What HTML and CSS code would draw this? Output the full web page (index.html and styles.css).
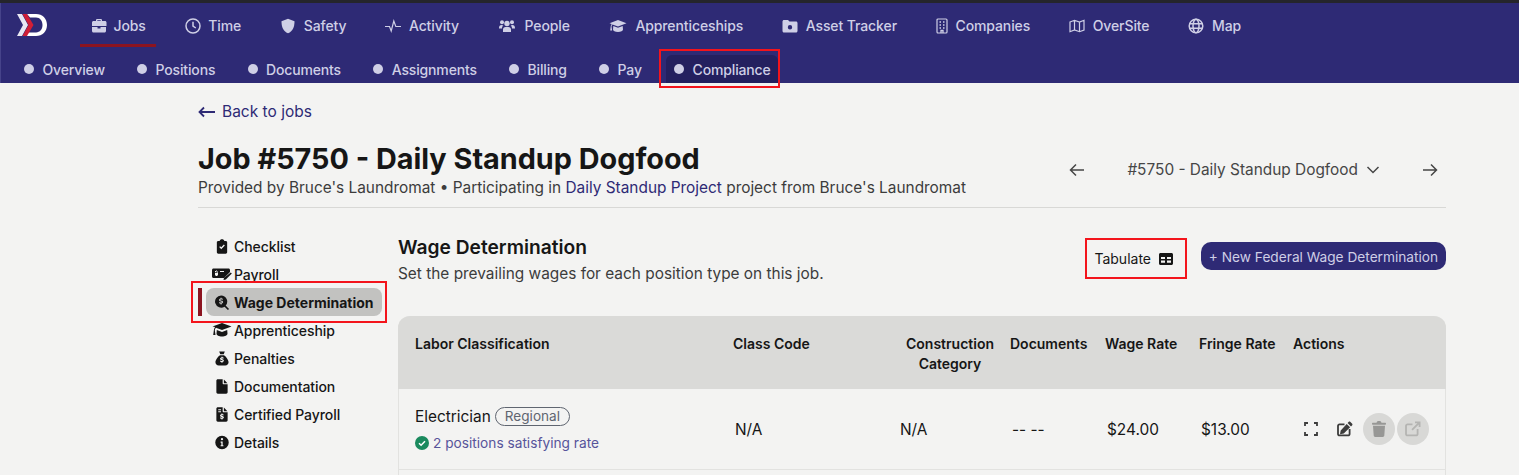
FILE: index.html
```html
<!DOCTYPE html>
<html lang="en">
<head>
    <meta charset="UTF-8">
    <meta name="viewport" content="width=device-width, initial-scale=1.0">
    <title>Job #5750 - Wage Determination</title>
    <link rel="stylesheet" href="styles.css">
</head>
<body>
    <div class="top-strip"></div>
    <header class="nav">
        <div class="nav-main">
            <svg class="logo" viewBox="0 0 32 26" preserveAspectRatio="none"><path d="M11 1h9c6.5 0 11 5 11 12s-4.500 12-11 12H7l3-4h10c4 0 6.500-3.500 6.500-8S24 5 20 5h-6z" fill="#fff"/><path d="M1 1h5l6 12-6 12H1l6-12z" fill="#e8e8f2"/><path d="M6.500 1H11l6.500 12L11 25H6.500l6-12z" fill="#d01f36"/></svg>
            <a class="nav-item active">
                <svg viewBox="0 0 16 16"><path d="M5 3V2.300C5 1.500 5.600 1 6.300 1h3.400c.7 0 1.300.5 1.300 1.300V3h3c.8 0 1.500.7 1.500 1.500V8H1V4.500C1 3.700 1.700 3 2.500 3zm1.300 0h3.400v-.7H6.300zM1 9h5.500v1.500h3V9H15v4c0 .8-.7 1.500-1.500 1.500h-11C1.700 14.500 1 13.800 1 13z"/></svg>
                Jobs
            </a>
            <a class="nav-item">
                <svg viewBox="0 0 16 16" class="line"><circle cx="8" cy="8" r="7"/><path d="M8 3.800V8l2.800 2"/></svg>
                Time
            </a>
            <a class="nav-item">
                <svg viewBox="0 0 16 16"><path d="M8 .7l6.500 2.500c0 5.500-1.500 9.800-6.500 12.100C3 13 1.500 8.700 1.500 3.200z"/></svg>
                Safety
            </a>
            <a class="nav-item">
                <svg viewBox="0 0 16 16" class="line thin"><path d="M0 8.500h4.500L6.200 13 8.800 3l2 5.500H16"/></svg>
                Activity
            </a>
            <a class="nav-item wide">
                <svg viewBox="0 0 18 16"><circle cx="4" cy="4.300" r="2"/><circle cx="14" cy="4.300" r="2"/><circle cx="9" cy="5.500" r="2.700"/><path d="M1 10c0-2 1-3 2.500-3 .7 0 1.400.2 1.800.6C4.500 8.300 4 9.300 4 10.500H1zm16 0c0-2-1-3-2.500-3-.7 0-1.400.2-1.800.6.800.7 1.300 1.700 1.300 2.900h3zM5 11.500C5 10 6.200 9 7.500 9h3c1.300 0 2.500 1 2.500 2.500V14H5z"/></svg>
                People
            </a>
            <a class="nav-item wide">
                <svg viewBox="0 0 18 16"><path d="M9 2l8.500 3.300L9 8.600 3.500 6.500c-.6.500-1 1.200-1 2l.6 4H1.200l.5-4c0-1 .4-1.900 1-2.600L.5 5.300z"/><path d="M4.300 8l4.700 1.800L13.700 8l.3 3.500c0 1.300-2.200 2.500-5 2.500s-5-1.200-5-2.500z"/></svg>
                Apprenticeships
            </a>
            <a class="nav-item">
                <svg viewBox="0 0 16 16"><path fill-rule="evenodd" d="M2 2h4l1.500 1.500H14c.8 0 1.500.7 1.500 1.500v8c0 .8-.7 1.500-1.500 1.500H2c-.8 0-1.500-.7-1.500-1.500V3.500C.5 2.700 1.200 2 2 2zm6 5a2.200 2.200 0 100 4.400A2.200 2.200 0 008 7z"/></svg>
                Asset Tracker
            </a>
            <a class="nav-item narrow">
                <svg viewBox="0 0 12 16" class="line thin"><rect x="1" y="1" width="10" height="14" rx="1"/><path d="M3.500 4h1.500M7 4h1.500M3.500 7h1.500M7 7h1.500M3.500 10h1.500M7 10h1.500M5 15v-2.500h2V15" stroke-width="1.300"/></svg>
                Companies
            </a>
            <a class="nav-item">
                <svg viewBox="0 0 16 16" class="line thin"><path d="M1 4l4.500-1.700L10.500 4 15 2.300V12l-4.500 1.700L5.500 12 1 13.700zM5.500 2.300V12M10.500 4v9.700"/></svg>
                OverSite
            </a>
            <a class="nav-item">
                <svg viewBox="0 0 16 16" class="line"><circle cx="8" cy="8" r="6.800"/><ellipse cx="8" cy="8" rx="3" ry="6.800"/><path d="M1.500 5.700h13M1.500 10.300h13"/></svg>
                Map
            </a>
        </div>
        <div class="nav-sub">
            <a class="sub-item"><span class="dot"></span>Overview</a>
            <a class="sub-item"><span class="dot"></span>Positions</a>
            <a class="sub-item"><span class="dot"></span>Documents</a>
            <a class="sub-item"><span class="dot"></span>Assignments</a>
            <a class="sub-item"><span class="dot"></span>Billing</a>
            <a class="sub-item"><span class="dot"></span>Pay</a>
            <a class="sub-item current"><span class="dot"></span>Compliance</a>
        </div>
    </header>

    <main class="page">
        <a class="back">
            <svg viewBox="0 0 18 12" class="line"><path d="M17 6H1.500M6 1.500L1.500 6 6 10.500" stroke-width="1.800"/></svg>
            Back to jobs
        </a>

        <div class="job-head">
            <div>
                <h1>Job #5750 - Daily Standup Dogfood</h1>
                <p class="job-sub">Provided by Bruce's Laundromat • Participating in <a>Daily Standup Project</a> project from Bruce's Laundromat</p>
            </div>
            <div class="job-switch">
                <svg viewBox="0 0 16 14" class="line"><path d="M15 7H1.500M7 1.500L1.500 7 7 12.500"/></svg>
                <span class="job-name">#5750 - Daily Standup Dogfood
                    <svg viewBox="0 0 14 8" class="line"><path d="M1.500 1l5.500 5.500L12.500 1"/></svg>
                </span>
                <svg viewBox="0 0 16 14" class="line"><path d="M1 7h13.500M9 1.500L14.500 7 9 12.500"/></svg>
            </div>
        </div>

        <div class="job-body">
            <nav class="side">
                <a class="side-item"><svg viewBox="0 0 16 16"><path fill-rule="evenodd" d="M5.500 2C5.700 1 6.700.3 8 .3s2.300.7 2.500 1.700H12c.8 0 1.500.7 1.500 1.500v10.700c0 .8-.7 1.500-1.500 1.500H4c-.8 0-1.500-.7-1.500-1.500V3.500C2.500 2.700 3.200 2 4 2zM5 8.500l2.200 2.300 3.800-4-1-.9-2.800 3-1.200-1.300z"/></svg>Checklist</a>
                <a class="side-item"><svg viewBox="0 0 20 16" class="wide-icon"><path fill-rule="evenodd" d="M1.500 2.500h15c.8 0 1.500.7 1.500 1.500v2l-6 6H1.500C.7 12 0 11.300 0 10.500V4c0-.8.7-1.500 1.500-1.500zM3 5v1h2.500v.7H3V9.500h1v.5h1v-.5h1V6h-2V5.500h2V5H5v-.5H4V5zM8 6h4V5H8z"/><path d="M18.800 6.500l1 1-6 6-2.300.6.600-2.300z"/></svg>Payroll</a>
                <div class="side-active">
                    <a class="side-item selected"><svg viewBox="0 0 16 16"><path fill-rule="evenodd" d="M7 .5a6.500 6.500 0 014.900 10.800l3.600 3.500-1.200 1.200-3.600-3.600A6.500 6.500 0 117 .5zm-.6 2.500v.8C5.400 4 4.800 4.700 4.800 5.400c0 1.900 3 1.300 3 2.200 0 .5-1.800.5-2.800-.1v1.300c.4.200.9.300 1.400.4v.8h1.200v-.8c1-.2 1.600-.9 1.600-1.700 0-1.900-3-1.400-3-2.200 0-.5 1.500-.5 2.600 0V4c-.4-.2-.8-.2-1.200-.3V3z"/></svg>Wage Determination</a>
                </div>
                <a class="side-item"><svg viewBox="0 0 20 16" class="wide-icon"><path d="M10 1l9.500 3.500L10 8 4 5.800c-.7.600-1.100 1.400-1.200 2.300l.7 5H1.200l.7-5c.1-1.100.5-2.200 1.200-3L.5 4.500z"/><path d="M4.800 8l5.200 1.900L15.200 8l.3 3.700c0 1.500-2.500 2.800-5.500 2.800s-5.500-1.300-5.500-2.800z"/></svg>Apprenticeship</a>
                <a class="side-item"><svg viewBox="0 0 16 16"><path fill-rule="evenodd" d="M5 .5h6L9.800 3.500H6.200zM6 4.500h4c2.500 1.500 5 5 5 7.500 0 2-1.500 3.500-3.500 3.500h-7C2.500 15.500 1 14 1 12c0-2.500 2.500-6 5-7.500zM7.400 6v.8c-1 .2-1.500.8-1.500 1.500 0 1.700 2.700 1.100 2.700 2 0 .4-1.500.4-2.500-.1v1.200c.4.200.8.300 1.300.3v.8h1.100v-.8c.9-.2 1.500-.8 1.500-1.500 0-1.700-2.700-1.300-2.700-2 0-.4 1.300-.4 2.300 0V6.900c-.4-.1-.7-.2-1.100-.2V6z"/></svg>Penalties</a>
                <a class="side-item"><svg viewBox="0 0 16 16"><path d="M3.500.3h5.200v4.200c0 .6.500 1.100 1.100 1.100H14v8.600c0 .9-.7 1.500-1.500 1.500h-9c-.8 0-1.500-.6-1.500-1.500V1.800C2 1 2.700.3 3.500.3zM10 .6l3.800 3.800H10z"/></svg>Documentation</a>
                <a class="side-item"><svg viewBox="0 0 16 16"><path fill-rule="evenodd" d="M3.500.3h5.200v4.200c0 .6.500 1.100 1.100 1.100H14v8.600c0 .9-.7 1.500-1.500 1.500h-9c-.8 0-1.500-.6-1.500-1.500V1.800C2 1 2.700.3 3.500.3zM4 2.500V3.500h3v-1zM4 4.500v1h3v-1zM7.400 7v.7c-1 .2-1.500.8-1.500 1.500 0 1.600 2.700 1.100 2.700 1.900 0 .4-1.500.4-2.500-.1v1.200c.4.200.8.300 1.300.3v.8h1.100v-.8c.9-.2 1.500-.8 1.500-1.500 0-1.600-2.700-1.300-2.700-2 0-.4 1.300-.4 2.300 0V7.800c-.4-.1-.7-.2-1.100-.2V7zM10 .6l3.800 3.800H10z"/></svg>Certified Payroll</a>
                <a class="side-item"><svg viewBox="0 0 16 16"><path fill-rule="evenodd" d="M8 .8a7.200 7.200 0 110 14.400A7.200 7.200 0 018 .8zM8 3.300A1.200 1.200 0 108 5.700 1.200 1.200 0 008 3.300zM6.500 7v1.200h.8v2.600h-.8V12h3v-1.200h-.8V7z"/></svg>Details</a>
            </nav>

            <section class="wages">
                <div class="wages-head">
                    <div>
                        <h2>Wage Determination</h2>
                        <p>Set the prevailing wages for each position type on this job.</p>
                    </div>
                    <div class="wages-actions">
                        <button class="tabulate">Tabulate
                            <svg viewBox="0 0 14 12"><path fill-rule="evenodd" d="M1.500 0h11C13.300 0 14 .7 14 1.500v9c0 .8-.7 1.500-1.500 1.500h-11C.7 12 0 11.300 0 10.500v-9C0 .7.7 0 1.500 0zM2 4v2h4V4zm6 0v2h4V4zM2 7.500v2.300h4V7.500zm6 0v2.300h4V7.500z"/></svg>
                        </button>
                        <button class="primary">+ New Federal Wage Determination</button>
                    </div>
                </div>

                <div class="wage-table">
                    <div class="wage-row wage-header">
                        <div>Labor Classification</div>
                        <div>Class Code</div>
                        <div class="center">Construction Category</div>
                        <div>Documents</div>
                        <div>Wage Rate</div>
                        <div>Fringe Rate</div>
                        <div>Actions</div>
                    </div>
                    <div class="wage-row wage-data">
                        <div class="labor-cell">
                            <div class="labor">Electrician <span class="pill">Regional</span></div>
                            <div class="satisfied">
                                <svg viewBox="0 0 14 14"><circle cx="7" cy="7" r="7" fill="#1a8a5e"/><path d="M4 7.200l2.100 2.100L10 5.200" fill="none" stroke="#fff" stroke-width="1.500"/></svg>
                                2 positions satisfying rate
                            </div>
                        </div>
                        <div class="val">N/A</div>
                        <div class="val cat">N/A</div>
                        <div class="val">-- --</div>
                        <div class="val">$24.00</div>
                        <div class="val">$13.00</div>
                        <div class="row-actions">
                            <span class="act"><svg viewBox="0 0 14 14" class="line small"><path d="M1 4V1h3M10 1h3v3M13 10v3h-3M4 13H1v-3" stroke-width="1.800"/></svg></span>
                            <span class="act"><svg viewBox="0 0 16 16"><path d="M13.200.8l2 2c.4.400.4 1 0 1.400L14 5.400 10.600 2l1.200-1.200c.4-.4 1-.4 1.400 0zM9.700 2.900l3.400 3.400-6.300 6.300-3.800.7.700-3.900z"/><path d="M2.500 2.500h5v1.800h-5c-.3 0-.6.300-.6.600v8c0 .3.300.6.600.6h8.600c.3 0 .6-.3.600-.6v-5h1.800v5c0 1.300-1.100 2.400-2.400 2.400H2.500C1.200 15.300.1 14.200.1 12.900V4.900c0-1.300 1.100-2.400 2.400-2.400z"/></svg></span>
                            <span class="act off"><svg viewBox="0 0 14 16"><path d="M4.500 1.700L5 .7C5.200.3 5.600 0 6 0h2c.4 0 .8.300 1 .7l.5 1H13c.6 0 1 .4 1 1s-.4 1-1 1H1c-.6 0-1-.4-1-1s.4-1 1-1zM1 4.700h12l-.7 9.900c0 .8-.7 1.400-1.500 1.400H3.200c-.8 0-1.500-.6-1.500-1.400z"/></svg></span>
                            <span class="act off faint"><svg viewBox="0 0 16 16"><path d="M2.500 2.500h5v1.800h-5c-.3 0-.6.300-.6.600v8c0 .3.300.6.600.6h8.600c.3 0 .6-.3.600-.6v-5h1.800v5c0 1.300-1.100 2.400-2.400 2.400H2.500C1.200 15.300.1 14.200.1 12.900V4.900c0-1.300 1.100-2.400 2.400-2.400z"/><path d="M10 .5h5.500V6h-1.800V3.600L7.700 9.600 6.400 8.300l6-6H10z"/></svg></span>
                        </div>
                    </div>
                    <div class="wage-row wage-data"></div>
                </div>
            </section>
        </div>
    </main>
</body>
</html>
```

FILE: styles.css
```css
* {
    box-sizing: border-box;
}
html, body {
    margin: 0;
    height: 475px;
    overflow: hidden;
}
body {
    font-family: Inter, "Liberation Sans", sans-serif;
    background: #f3f3f2;
    color: #161616;
    font-size: 16px;
}
svg {
    fill: currentColor;
    display: block;
    flex: none;
}
svg.line {
    fill: none;
    stroke: currentColor;
    stroke-width: 1.5;
}
svg.thin {
    stroke-width: 1.2;
}
h1, h2, p {
    margin: 0;
}
button {
    font: inherit;
    border: 0;
    background: none;
}

.top-strip {
    height: 3px;
    background: #25252b;
}
.nav {
    height: 80px;
    background: #2e2a75;
    border-left: 1px solid #46438a;
    color: #cfcfe6;
    font-size: 14px;
    font-weight: 500;
}
.nav-main {
    display: flex;
    height: 43px;
    padding-left: 15px;
    letter-spacing: -0.1px;
}
.logo {
    width: 32px;
    height: 24px;
    margin: 10px 32px 0 0;
}
.nav-item {
    display: flex;
    align-items: center;
    gap: 7.5px;
    height: 44px;
    padding: 1px 10px 0 11px;
    margin-right: 18px;
}
.nav-item svg {
    width: 16px;
    height: 16px;
}
.nav-item.wide {
    gap: 8.5px;
}
.nav-item.wide svg {
    width: 18px;
}
.nav-item.narrow svg {
    width: 12px;
}
.nav-item.active {
    border-bottom: 3px solid #8c1420;
    padding-top: 4px;
    gap: 6.5px;
}
.nav-sub {
    display: flex;
    height: 37px;
    padding: 9px 0 0 15px;
    gap: 16.2px;
    letter-spacing: -0.15px;
}
.sub-item {
    display: flex;
    align-items: center;
    gap: 8.5px;
    padding: 0 8px;
    border-radius: 6px 6px 0 0;
}
.dot {
    width: 10px;
    height: 10px;
    border-radius: 50%;
    background: #cfcfe6;
}
.sub-item.current {
    position: relative;
    background: #24205f;
    padding-right: 7px;
}
/* red callouts drawn over the ui */
.sub-item.current::after {
    content: "";
    position: absolute;
    left: -7px;
    right: -2px;
    top: -6px;
    bottom: -5px;
    border: 2px solid #f3141c;
}

.page {
    padding: 0 73px 0 198px;
}
.back {
    display: flex;
    align-items: center;
    gap: 6px;
    margin-top: 18px;
    height: 21px;
    color: #2e2a75;
    font-size: 15.5px;
}
.back svg {
    width: 18px;
    height: 12px;
}
.job-head {
    display: flex;
    justify-content: space-between;
    align-items: center;
    margin-top: 18px;
    height: 68px;
    padding-bottom: 8px;
    border-bottom: 1px solid #d8d8d6;
}
h1 {
    font-size: 28.8px;
    font-weight: 700;
    line-height: 34px;
    margin-bottom: 2px;
}
.job-sub {
    color: #3c3c3c;
    line-height: 20px;
    font-size: 15.4px;
}
.job-sub a {
    color: #2e2a75;
}
.job-switch {
    display: flex;
    align-items: center;
    color: #464646;
    gap: 42px;
    margin-right: 8px;
    font-size: 15.4px;
}
.job-switch > svg {
    width: 16px;
    height: 14px;
}
.job-name {
    display: flex;
    align-items: center;
    gap: 8px;
}
.job-name svg {
    width: 14px;
    height: 8px;
}

.job-body {
    display: flex;
    margin-top: 25px;
}
.side {
    width: 200px;
    flex: none;
    margin-top: -1px;
    font-size: 14px;
    font-weight: 500;
    letter-spacing: -0.07px;
}
.side-item {
    display: flex;
    align-items: center;
    height: 28px;
    padding-left: 16px;
    gap: 4px;
}
.side-item svg {
    width: 16px;
    height: 15px;
}
.side-item svg.wide-icon {
    width: 20px;
    height: 16px;
    margin: 0 -2px;
}
.side-active {
    position: relative;
    padding-left: 4px;
    border-left: 4px solid #8c1420;
    margin-right: 16px;
}
.side-active .side-item {
    padding-left: 8px;
}
.side-active::after {
    content: "";
    position: absolute;
    left: -11px;
    right: -5px;
    top: -7px;
    bottom: -7px;
    border: 2px solid #f3141c;
}
.selected {
    background: #c2c2c0;
    border-radius: 8px;
    font-weight: 700;
    letter-spacing: 0;
}

.wages {
    flex: 1;
}
.wages-head {
    display: flex;
    justify-content: space-between;
    height: 83px;
}
h2 {
    font-size: 19.2px;
    font-weight: 600;
    line-height: 26px;
    margin-top: 1px;
}
.wages-head p {
    color: #3c3c3c;
    font-size: 15.4px;
    line-height: 24px;
    margin-top: 2px;
}
.wages-actions {
    display: flex;
    align-items: flex-start;
    gap: 14px;
}
.tabulate {
    position: relative;
    display: flex;
    align-items: center;
    gap: 8px;
    height: 41px;
    margin-top: 5px;
    padding: 0 14px 0 9px;
    font-size: 14px;
    color: #161616;
}
.tabulate svg {
    width: 14px;
    height: 12px;
}
.tabulate::after {
    content: "";
    position: absolute;
    inset: 0;
    border: 2px solid #f3141c;
}
.primary {
    height: 28px;
    width: 245px;
    margin-top: 9px;
    padding: 1px 0 0;
    background: #2e2a75;
    color: #cfcfe6;
    border-radius: 10px;
    font-size: 13.7px;
    white-space: nowrap;
}

.wage-table {
    border: 1px solid #e2e2e0;
    border-top: 0;
    border-radius: 12px 12px 0 0;
    font-size: 14px;
}
.wage-row {
    display: grid;
    grid-template-columns: 318px 157px 120px 95px 94px 94px 1fr;
    padding-left: 16px;
}
.wage-header {
    height: 73px;
    background: #dadad8;
    border-radius: 12px 12px 0 0;
    margin: 0 -1px;
    padding-left: 17px;
    padding-top: 18px;
    font-weight: 600;
    line-height: 20px;
}
.center {
    text-align: center;
}
.wage-data {
    height: 81px;
    align-items: center;
    border-bottom: 1px solid #e2e2e0;
    font-size: 15.4px;
}
.labor-cell {
    padding-bottom: 1px;
}
.labor {
    display: flex;
    align-items: center;
    gap: 4px;
    line-height: 20px;
}
.pill {
    border: 1px solid #5f6570;
    border-radius: 10px;
    color: #5f6570;
    font-size: 13.6px;
    line-height: 17px;
    padding: 0 9px;
}
.satisfied {
    display: flex;
    align-items: center;
    gap: 4px;
    margin-top: 8px;
    font-size: 13.7px;
    color: #57549a;
}
.satisfied svg {
    width: 14px;
    height: 14px;
}
.val {
    padding-left: 2px;
}
.val.cat {
    padding-left: 10px;
}
.row-actions {
    display: flex;
    margin-left: 2px;
    gap: 2px;
}
.act {
    width: 32px;
    height: 32px;
    border-radius: 50%;
    display: flex;
    align-items: center;
    justify-content: center;
    color: #3c3c3c;
}
.act svg {
    width: 16px;
    height: 16px;
}
.act svg.small {
    width: 14px;
    height: 14px;
}
.act.off {
    background: #d8d8d6;
    color: #979795;
}
.act.faint {
    color: #b4b4b2;
}
```
